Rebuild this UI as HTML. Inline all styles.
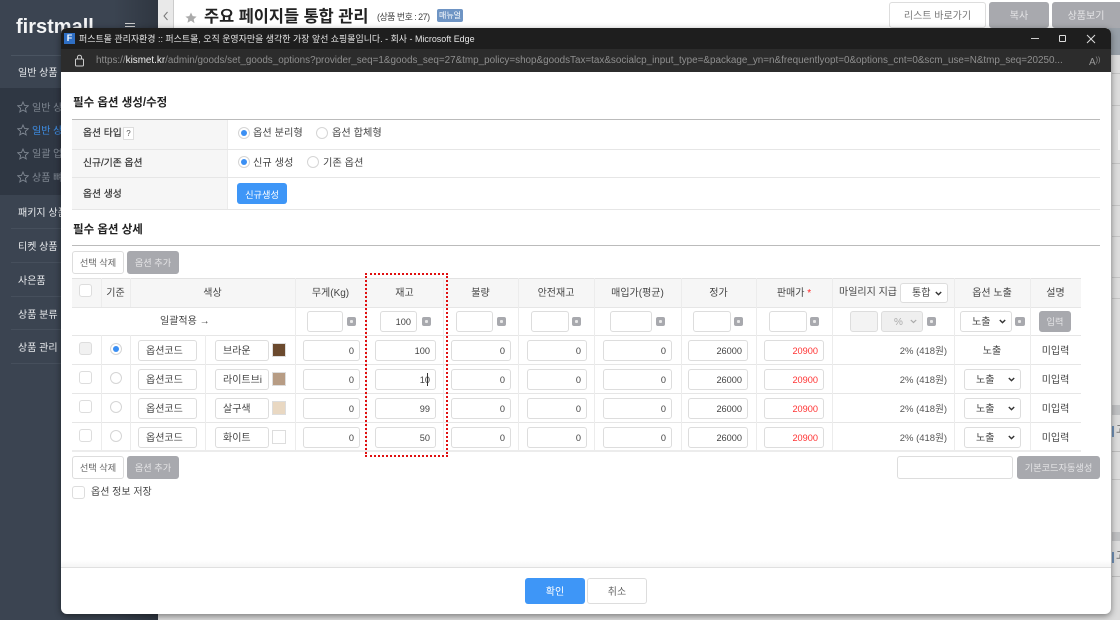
<!DOCTYPE html>
<html lang="ko"><head><meta charset="utf-8"><title>퍼스트몰 관리자환경</title>
<style>
*{box-sizing:border-box;margin:0;padding:0}
html,body{width:1120px;height:620px;overflow:hidden;background:#cfcfcf}
body{position:relative;font-family:"Liberation Sans","Noto Sans CJK KR",sans-serif;font-size:10.2px;color:#444}
.a,.i,.t,.s,.m,.b,.c,.r,.l,.v{position:absolute}
.t{white-space:nowrap;line-height:14px}
.i{background:#fff;border:1px solid #ddd;border-radius:3px;height:21px;line-height:21px;text-align:right;padding-right:5px;color:#444;font-size:9.2px;white-space:nowrap;overflow:hidden}
.i.L{text-align:left;padding:0 0 0 7px;font-size:10px;line-height:22px}
.i.red{color:#f33}
.m{width:9px;height:9px;background:#a8a9ae;border-radius:2px}
.m:after{content:"";position:absolute;left:3px;top:3px;width:3px;height:3px;background:#e8e8e8;border-radius:1px}
.s{background:#fff;border:1px solid #ddd;border-radius:3px;height:21px;line-height:22px;font-size:10px;color:#444;white-space:nowrap}
.s svg{position:absolute;right:5px;top:7px}
.c{width:13px;height:13px;background:#fff;border:1px solid #ddd;border-radius:3px}
.r{width:12px;height:12px;border-radius:50%;background:#fff;border:1px solid #d5d5d5}
.r.on:after{content:"";position:absolute;left:2px;top:2px;width:6px;height:6px;border-radius:50%;background:#3b8ff3}
.b{border-radius:3px;text-align:center;white-space:nowrap;height:23px;line-height:22px;font-size:9.2px}
.g{background:#a8a9ae;color:#e4e4e6;border:1px solid #a8a9ae}
.w{background:#fff;color:#666;border:1px solid #ddd}
.l{background:#e6e6e6}
.v{background:#ececec;width:1px}
.th{font-size:10px;color:#444;text-align:center;line-height:14px}
.hd{font-weight:700;color:#222;font-size:11.5px}
.lb{color:#333;font-size:9.8px;-webkit-text-stroke:.2px #333}
</style></head><body>

<!-- BACKGROUND PAGE -->
<div class="a" style="left:0;top:0;width:158px;height:620px;background:#3b4451"></div>
<div class="a" style="left:0;top:88px;width:158px;height:107px;background:#2f3743"></div>
<div class="a" style="left:11px;top:55px;width:147px;height:1px;background:#4a5461"></div>
<div class="t" style="left:16px;top:16px;font-size:20px;line-height:22px;font-weight:700;color:#f4f5f6">firstmall</div>
<div class="a" style="left:125px;top:23px;width:10px;height:1px;background:#ddd"></div>
<div class="a" style="left:125px;top:26px;width:10px;height:1px;background:#ddd"></div>
<div class="a" style="left:125px;top:29px;width:10px;height:1px;background:#ddd"></div>
<div class="t" style="left:18px;top:67px;color:#e8eaed;font-size:10px">일반 상품</div>
<div class="t" style="left:32px;top:102px;color:#7f8792;font-size:10px">일반 상품</div>
<div class="t" style="left:32px;top:125px;color:#3e8fe8;font-size:10px">일반 상품</div>
<div class="t" style="left:32px;top:148px;color:#7f8792;font-size:10px">일괄 업데</div>
<div class="t" style="left:32px;top:172px;color:#7f8792;font-size:10px">상품 뼈대</div>
<svg class="a" style="left:17px;top:101px" width="12" height="90" viewBox="0 0 12 90" fill="none" stroke="#7f8792" stroke-width=".9"><path d="M6 1l1.5 3.4 3.7.4-2.8 2.5.8 3.6L6 9l-3.2 1.9.8-3.6L.8 4.8l3.7-.4z"/><path transform="translate(0 23)" d="M6 1l1.5 3.4 3.7.4-2.8 2.5.8 3.6L6 9l-3.2 1.9.8-3.6L.8 4.8l3.7-.4z"/><path transform="translate(0 47)" d="M6 1l1.5 3.4 3.7.4-2.8 2.5.8 3.6L6 9l-3.2 1.9.8-3.6L.8 4.8l3.7-.4z"/><path transform="translate(0 70)" d="M6 1l1.5 3.4 3.7.4-2.8 2.5.8 3.6L6 9l-3.2 1.9.8-3.6L.8 4.8l3.7-.4z"/></svg>
<div class="t" style="left:18px;top:207px;color:#e8eaed;font-size:10px">패키지 상품</div>
<div class="a" style="left:11px;top:228px;width:147px;height:1px;background:#464f5c"></div>
<div class="t" style="left:18px;top:241px;color:#e8eaed;font-size:10px">티켓 상품</div>
<div class="a" style="left:11px;top:262px;width:147px;height:1px;background:#464f5c"></div>
<div class="t" style="left:18px;top:275px;color:#e8eaed;font-size:10px">사은품</div>
<div class="a" style="left:11px;top:296px;width:147px;height:1px;background:#464f5c"></div>
<div class="t" style="left:18px;top:309px;color:#e8eaed;font-size:10px">상품 분류</div>
<div class="a" style="left:11px;top:329px;width:147px;height:1px;background:#464f5c"></div>
<div class="t" style="left:18px;top:342px;color:#e8eaed;font-size:10px">상품 관리</div>
<div class="a" style="left:11px;top:363px;width:147px;height:1px;background:#464f5c"></div>
<div class="a" style="left:46px;top:0;width:112px;height:620px;background:linear-gradient(90deg,rgba(0,0,0,0) 60%,rgba(0,0,0,.2))"></div>

<div class="a" style="left:158px;top:0;width:962px;height:28px;background:#fff"></div>
<div class="a" style="left:158px;top:0;width:16px;height:28px;background:#e9e9e9;border-right:1px solid #ccc"></div>
<svg class="a" style="left:162px;top:11px" width="8" height="10" viewBox="0 0 8 10" fill="none" stroke="#777" stroke-width="1"><path d="M5.5 1L2 5l3.5 4"/></svg>
<svg class="a" style="left:185px;top:12px" width="12" height="12" viewBox="0 0 12 12" fill="#aaa"><path d="M6 .5l1.7 3.6 3.9.5-2.9 2.7.8 3.9L6 8.8l-3.5 1.9.8-3.9L.4 4.6l3.9-.5z"/></svg>
<div class="t" style="left:204px;top:5px;font-size:16.4px;line-height:24px;font-weight:700;color:#222">주요 페이지들 통합 관리</div>
<div class="t" style="left:377px;top:10px;font-size:9px;letter-spacing:-.55px;color:#444">(상품 번호 : 27)</div>
<div class="a" style="left:437px;top:9px;width:26px;height:13px;background:#6e94c4;border-radius:2px;color:#fff;font-size:8px;line-height:13px;text-align:center">매뉴얼</div>
<div class="b w" style="left:889px;top:2px;width:97px;height:26px;line-height:25px;font-size:10px;color:#777;padding-top:1px">리스트 바로가기</div>
<div class="b g" style="left:989px;top:2px;width:60px;height:26px;line-height:25px;font-size:10px;padding-top:1px">복사</div>
<div class="b g" style="left:1052px;top:2px;width:68px;height:26px;line-height:25px;font-size:10px;border-radius:3px 0 0 3px;padding-top:1px">상품보기</div>

<div class="a" style="left:158px;top:28px;width:962px;height:592px;background:#dcdcdc"></div>
<div class="a" style="left:1108px;top:28px;width:12px;height:27px;background:#98a0a8"></div>
<div class="a" style="left:1112px;top:73px;width:8px;height:1px;background:#c4c4c4"></div>
<div class="a" style="left:1112px;top:105px;width:8px;height:1px;background:#c4c4c4"></div>
<div class="a" style="left:1118px;top:130px;width:2px;height:20px;background:#eee"></div>
<div class="a" style="left:1112px;top:163px;width:8px;height:1px;background:#c4c4c4"></div>
<div class="a" style="left:1112px;top:205px;width:8px;height:1px;background:#c4c4c4"></div>
<div class="a" style="left:1112px;top:236px;width:8px;height:1px;background:#c4c4c4"></div>
<div class="a" style="left:1112px;top:277px;width:8px;height:1px;background:#c4c4c4"></div>
<div class="a" style="left:1112px;top:298px;width:8px;height:1px;background:#c4c4c4"></div>
<div class="a" style="left:1112px;top:405px;width:8px;height:10px;background:#bfc0c2"></div>
<div class="a" style="left:1112px;top:426px;width:2px;height:11px;background:#6f8fb5"></div>
<div class="t" style="left:1116px;top:424px;font-size:10px;color:#444">고</div>
<div class="a" style="left:1112px;top:451px;width:8px;height:1px;background:#bdbdbd"></div>
<div class="a" style="left:1112px;top:479px;width:8px;height:1px;background:#c4c4c4"></div>
<div class="a" style="left:1112px;top:532px;width:8px;height:9px;background:#bfc0c2"></div>
<div class="a" style="left:1112px;top:552px;width:2px;height:11px;background:#6f8fb5"></div>
<div class="t" style="left:1116px;top:550px;font-size:10px;color:#444">고</div>
<div class="a" style="left:1112px;top:576px;width:8px;height:1px;background:#bdbdbd"></div>

<!-- POPUP WINDOW -->
<div class="a" style="left:61px;top:28px;width:1050px;height:586px;background:#fff;border-radius:6px;box-shadow:0 2px 7px rgba(0,0,0,.45);overflow:hidden">
  <div class="a" style="left:0;top:0;width:1050px;height:21px;background:#1e1e1e"></div>
  <div class="a" style="left:0;top:21px;width:1050px;height:23px;background:#2c2c2c"></div>
</div>
<div class="a" style="left:64px;top:33px;width:11px;height:11px;background:#2f6fc4;color:#fff;font-size:9px;font-weight:700;line-height:11px;text-align:center">F</div>
<div class="t" style="left:79px;top:32px;font-size:8.95px;color:#e6e6e6">퍼스트몰 관리자환경 :: 퍼스트몰, 오직 운영자만을 생각한 가장 앞선 쇼핑몰입니다. - 회사 - Microsoft Edge</div>
<div class="a" style="left:1031px;top:38px;width:8px;height:1px;background:#ccc"></div>
<div class="a" style="left:1059px;top:35px;width:7px;height:7px;border:1px solid #ddd;border-radius:1px"></div>
<svg class="a" style="left:1086px;top:34px" width="10" height="10" viewBox="0 0 10 10" stroke="#ddd" stroke-width="1" fill="none"><path d="M1 1l8 8M9 1l-8 8"/></svg>
<svg class="a" style="left:74px;top:54px" width="11" height="13" viewBox="0 0 11 13" fill="none" stroke="#ccc" stroke-width="1"><rect x="1.5" y="5" width="8" height="7" rx="1"/><path d="M3.5 5V3.2a2 2 0 0 1 4 0V5"/></svg>
<div class="t" style="left:96px;top:54px;font-size:9.9px;color:#8f8f8f;width:975px;overflow:hidden">https://<span style="color:#eee">kismet.kr</span>/admin/goods/set_goods_options?provider_seq=1&amp;goods_seq=27&amp;tmp_policy=shop&amp;goodsTax=tax&amp;socialcp_input_type=&amp;package_yn=n&amp;frequentlyopt=0&amp;options_cnt=0&amp;scm_use=N&amp;tmp_seq=20250...</div>
<div class="t" style="left:1089px;top:54px;font-size:10px;color:#999">A<span style="font-size:7px;vertical-align:3px">))</span></div>

<!-- Section 1 -->
<div class="t hd" style="left:73px;top:96px">필수 옵션 생성/수정</div>
<div class="a" style="left:72px;top:119px;width:1028px;height:1px;background:#bbb"></div>
<div class="a" style="left:72px;top:120px;width:155px;height:89px;background:#f6f6f6"></div>
<div class="a" style="left:227px;top:120px;width:1px;height:89px;background:#ececec"></div>
<div class="l" style="left:72px;top:149px;width:1028px;height:1px"></div>
<div class="l" style="left:72px;top:177px;width:1028px;height:1px"></div>
<div class="l" style="left:72px;top:209px;width:1028px;height:1px"></div>
<div class="t lb" style="left:83px;top:127px">옵션 타입</div>
<div class="a" style="left:123px;top:127px;width:11px;height:13px;border:1px solid #ddd;background:#fff;font-size:8px;line-height:11px;text-align:center;color:#555">?</div>
<div class="t lb" style="left:83px;top:157px">신규/기존 옵션</div>
<div class="t lb" style="left:83px;top:188px">옵션 생성</div>
<div class="r on" style="left:238px;top:127px"></div>
<div class="t" style="left:253px;top:127px;color:#444">옵션 분리형</div>
<div class="r" style="left:316px;top:127px"></div>
<div class="t" style="left:332px;top:127px;color:#444">옵션 합체형</div>
<div class="r on" style="left:238px;top:156px"></div>
<div class="t" style="left:253px;top:157px;color:#444">신규 생성</div>
<div class="r" style="left:307px;top:156px"></div>
<div class="t" style="left:323px;top:157px;color:#444">기존 옵션</div>
<div class="b" style="left:237px;top:183px;width:50px;height:21px;line-height:20px;background:#3e96f7;color:#fff;padding-top:2px">신규생성</div>

<!-- Section 2 -->
<div class="t hd" style="left:73px;top:223px">필수 옵션 상세</div>
<div class="a" style="left:72px;top:245px;width:1028px;height:1px;background:#bbb"></div>
<div class="b w" style="left:72px;top:251px;width:52px">선택 삭제</div>
<div class="b g" style="left:127px;top:251px;width:52px">옵션 추가</div>

<!-- Table -->
<div class="a" style="left:72px;top:278px;width:1009px;height:29px;background:#f6f6f6;border-top:1px solid #e2e2e2"></div>
<div class="l" style="left:72px;top:307px;width:1009px;height:1px"></div>
<div class="l" style="left:72px;top:335px;width:1009px;height:1px"></div>
<div class="l" style="left:72px;top:364px;width:1009px;height:1px"></div>
<div class="l" style="left:72px;top:393px;width:1009px;height:1px"></div>
<div class="l" style="left:72px;top:422px;width:1009px;height:1px"></div>
<div class="a" style="left:72px;top:450px;width:1009px;height:2px;background:#ececec"></div>
<div class="v" style="left:101px;top:278px;height:29px"></div><div class="v" style="left:101px;top:335px;height:115px"></div>
<div class="v" style="left:130px;top:278px;height:29px"></div><div class="v" style="left:130px;top:335px;height:115px"></div>
<div class="v" style="left:205px;top:335px;height:115px"></div>
<div class="v" style="left:295px;top:278px;height:172px"></div>
<div class="v" style="left:366px;top:278px;height:172px"></div>
<div class="v" style="left:443px;top:278px;height:172px"></div>
<div class="v" style="left:518px;top:278px;height:172px"></div>
<div class="v" style="left:594px;top:278px;height:172px"></div>
<div class="v" style="left:681px;top:278px;height:172px"></div>
<div class="v" style="left:756px;top:278px;height:172px"></div>
<div class="v" style="left:832px;top:278px;height:172px"></div>
<div class="v" style="left:954px;top:278px;height:172px"></div>
<div class="v" style="left:1030px;top:278px;height:172px"></div>

<!-- Header -->
<div class="c" style="left:79px;top:284px"></div>
<div class="t th" style="left:101px;top:287px;width:29px">기준</div>
<div class="t th" style="left:130px;top:287px;width:165px">색상</div>
<div class="t th" style="left:295px;top:287px;width:71px">무게(Kg)</div>
<div class="t th" style="left:366px;top:287px;width:77px">재고</div>
<div class="t th" style="left:443px;top:287px;width:75px">불량</div>
<div class="t th" style="left:518px;top:287px;width:76px">안전재고</div>
<div class="t th" style="left:594px;top:287px;width:87px">매입가(평균)</div>
<div class="t th" style="left:681px;top:287px;width:75px">정가</div>
<div class="t th" style="left:756px;top:287px;width:76px">판매가 <span style="color:#f22">*</span></div>
<div class="t" style="left:839px;top:286px;font-size:10px;color:#444">마일리지 지급</div>
<div class="s" style="left:900px;top:283px;width:48px;height:20px;line-height:20px;padding-left:11px">통합<svg width="7" height="5" viewBox="0 0 7 5" fill="none" stroke="#333" stroke-width="1.4"><path d="M.8 1l2.7 2.6L6.2 1"/></svg></div>
<div class="t th" style="left:954px;top:287px;width:76px">옵션 노출</div>
<div class="t th" style="left:1030px;top:287px;width:51px">설명</div>

<!-- Bulk row -->
<div class="t" style="left:160px;top:315px;font-size:10px;color:#444">일괄적용 →</div>
<div class="i" style="left:307px;top:311px;width:36px"></div><div class="m" style="left:347px;top:317px"></div>
<div class="i" style="left:380px;top:311px;width:37px">100</div><div class="m" style="left:422px;top:317px"></div>
<div class="i" style="left:456px;top:311px;width:37px"></div><div class="m" style="left:497px;top:317px"></div>
<div class="i" style="left:531px;top:311px;width:38px"></div><div class="m" style="left:572px;top:317px"></div>
<div class="i" style="left:610px;top:311px;width:42px"></div><div class="m" style="left:656px;top:317px"></div>
<div class="i" style="left:693px;top:311px;width:38px"></div><div class="m" style="left:734px;top:317px"></div>
<div class="i" style="left:769px;top:311px;width:38px"></div><div class="m" style="left:810px;top:317px"></div>
<div class="i" style="left:850px;top:311px;width:28px;background:#f3f3f3"></div>
<div class="s" style="left:881px;top:311px;width:42px;background:#efefef;color:#aaa;padding-left:12px">%<svg width="7" height="5" viewBox="0 0 7 5" fill="none" stroke="#aaa" stroke-width="1.2"><path d="M.8 1l2.7 2.6L6.2 1"/></svg></div>
<div class="m" style="left:927px;top:317px"></div>
<div class="s" style="left:960px;top:311px;width:52px;padding-left:11px">노출<svg width="7" height="5" viewBox="0 0 7 5" fill="none" stroke="#333" stroke-width="1.4"><path d="M.8 1l2.7 2.6L6.2 1"/></svg></div>
<div class="m" style="left:1015px;top:317px;width:10px"></div>
<div class="b g" style="left:1039px;top:311px;width:32px;height:21px;line-height:20px">입력</div>

<!-- Row 1 -->
<div class="c" style="left:79px;top:342px;background:#f1f1f1"></div>
<div class="r on" style="left:110px;top:343px"></div>
<div class="i L" style="left:138px;top:340px;width:59px">옵션코드</div>
<div class="i L" style="left:215px;top:340px;width:54px">브라운</div>
<div class="a" style="left:272px;top:343px;width:14px;height:14px;background:#6b4a2e;border:1px solid #ddd"></div>
<div class="i" style="left:303px;top:340px;width:57px">0</div>
<div class="i" style="left:375px;top:340px;width:61px">100</div>
<div class="i" style="left:451px;top:340px;width:60px">0</div>
<div class="i" style="left:527px;top:340px;width:60px">0</div>
<div class="i" style="left:603px;top:340px;width:69px">0</div>
<div class="i" style="left:688px;top:340px;width:60px">26000</div>
<div class="i red" style="left:764px;top:340px;width:60px">20900</div>
<div class="t" style="left:832px;top:345px;width:115px;text-align:right;font-size:9.5px;color:#555">2% (418원)</div>
<div class="t" style="left:954px;top:345px;width:76px;text-align:center;font-size:10px">노출</div>
<div class="t" style="left:1030px;top:345px;width:51px;text-align:center;font-size:10px">미입력</div>

<!-- Row 2 -->
<div class="c" style="left:79px;top:371px"></div>
<div class="r" style="left:110px;top:372px"></div>
<div class="i L" style="left:138px;top:369px;width:59px">옵션코드</div>
<div class="i L" style="left:215px;top:369px;width:54px">라이트브i</div>
<div class="a" style="left:272px;top:372px;width:14px;height:14px;background:#b79c84;border:1px solid #ddd"></div>
<div class="i" style="left:303px;top:369px;width:57px">0</div>
<div class="i" style="left:375px;top:369px;width:61px">10</div>
<div class="a" style="left:427px;top:373px;width:1px;height:13px;background:#333"></div>
<div class="i" style="left:451px;top:369px;width:60px">0</div>
<div class="i" style="left:527px;top:369px;width:60px">0</div>
<div class="i" style="left:603px;top:369px;width:69px">0</div>
<div class="i" style="left:688px;top:369px;width:60px">26000</div>
<div class="i red" style="left:764px;top:369px;width:60px">20900</div>
<div class="t" style="left:832px;top:374px;width:115px;text-align:right;font-size:9.5px;color:#555">2% (418원)</div>
<div class="s" style="left:964px;top:369px;width:57px;padding-left:11px">노출<svg width="7" height="5" viewBox="0 0 7 5" fill="none" stroke="#333" stroke-width="1.4"><path d="M.8 1l2.7 2.6L6.2 1"/></svg></div>
<div class="t" style="left:1030px;top:374px;width:51px;text-align:center;font-size:10px">미입력</div>

<!-- Row 3 -->
<div class="c" style="left:79px;top:400px"></div>
<div class="r" style="left:110px;top:401px"></div>
<div class="i L" style="left:138px;top:398px;width:59px">옵션코드</div>
<div class="i L" style="left:215px;top:398px;width:54px">살구색</div>
<div class="a" style="left:272px;top:401px;width:14px;height:14px;background:#e9d8c2;border:1px solid #ddd"></div>
<div class="i" style="left:303px;top:398px;width:57px">0</div>
<div class="i" style="left:375px;top:398px;width:61px">99</div>
<div class="i" style="left:451px;top:398px;width:60px">0</div>
<div class="i" style="left:527px;top:398px;width:60px">0</div>
<div class="i" style="left:603px;top:398px;width:69px">0</div>
<div class="i" style="left:688px;top:398px;width:60px">26000</div>
<div class="i red" style="left:764px;top:398px;width:60px">20900</div>
<div class="t" style="left:832px;top:403px;width:115px;text-align:right;font-size:9.5px;color:#555">2% (418원)</div>
<div class="s" style="left:964px;top:398px;width:57px;padding-left:11px">노출<svg width="7" height="5" viewBox="0 0 7 5" fill="none" stroke="#333" stroke-width="1.4"><path d="M.8 1l2.7 2.6L6.2 1"/></svg></div>
<div class="t" style="left:1030px;top:403px;width:51px;text-align:center;font-size:10px">미입력</div>

<!-- Row 4 -->
<div class="c" style="left:79px;top:429px"></div>
<div class="r" style="left:110px;top:430px"></div>
<div class="i L" style="left:138px;top:427px;width:59px">옵션코드</div>
<div class="i L" style="left:215px;top:427px;width:54px">화이트</div>
<div class="a" style="left:272px;top:430px;width:14px;height:14px;background:#fff;border:1px solid #ddd"></div>
<div class="i" style="left:303px;top:427px;width:57px">0</div>
<div class="i" style="left:375px;top:427px;width:61px">50</div>
<div class="i" style="left:451px;top:427px;width:60px">0</div>
<div class="i" style="left:527px;top:427px;width:60px">0</div>
<div class="i" style="left:603px;top:427px;width:69px">0</div>
<div class="i" style="left:688px;top:427px;width:60px">26000</div>
<div class="i red" style="left:764px;top:427px;width:60px">20900</div>
<div class="t" style="left:832px;top:432px;width:115px;text-align:right;font-size:9.5px;color:#555">2% (418원)</div>
<div class="s" style="left:964px;top:427px;width:57px;padding-left:11px">노출<svg width="7" height="5" viewBox="0 0 7 5" fill="none" stroke="#333" stroke-width="1.4"><path d="M.8 1l2.7 2.6L6.2 1"/></svg></div>
<div class="t" style="left:1030px;top:432px;width:51px;text-align:center;font-size:10px">미입력</div>

<!-- Red dotted highlight -->
<div class="a" style="left:365px;top:273px;width:83px;height:184px;border:2px dotted #e01010"></div>

<!-- Below table -->
<div class="b w" style="left:72px;top:456px;width:52px">선택 삭제</div>
<div class="b g" style="left:127px;top:456px;width:52px">옵션 추가</div>
<div class="a" style="left:897px;top:456px;width:116px;height:23px;background:#fff;border:1px solid #ddd;border-radius:3px"></div>
<div class="b g" style="left:1017px;top:456px;width:83px">기본코드자동생성</div>
<div class="c" style="left:72px;top:486px"></div>
<div class="t" style="left:91px;top:486px;color:#444;font-size:10px">옵션 정보 저장</div>

<!-- Footer -->
<div class="a" style="left:61px;top:560px;width:1050px;height:7px;background:linear-gradient(#fff,#f5f5f5)"></div>
<div class="a" style="left:61px;top:567px;width:1050px;height:1px;background:#e0e0e0"></div>
<div class="b" style="left:525px;top:578px;width:60px;height:26px;line-height:25px;background:#3e96f7;color:#fff;font-size:10px;padding-top:2px">확인</div>
<div class="b w" style="left:587px;top:578px;width:60px;height:26px;line-height:25px;font-size:10px;padding-top:1px">취소</div>
</body></html>
